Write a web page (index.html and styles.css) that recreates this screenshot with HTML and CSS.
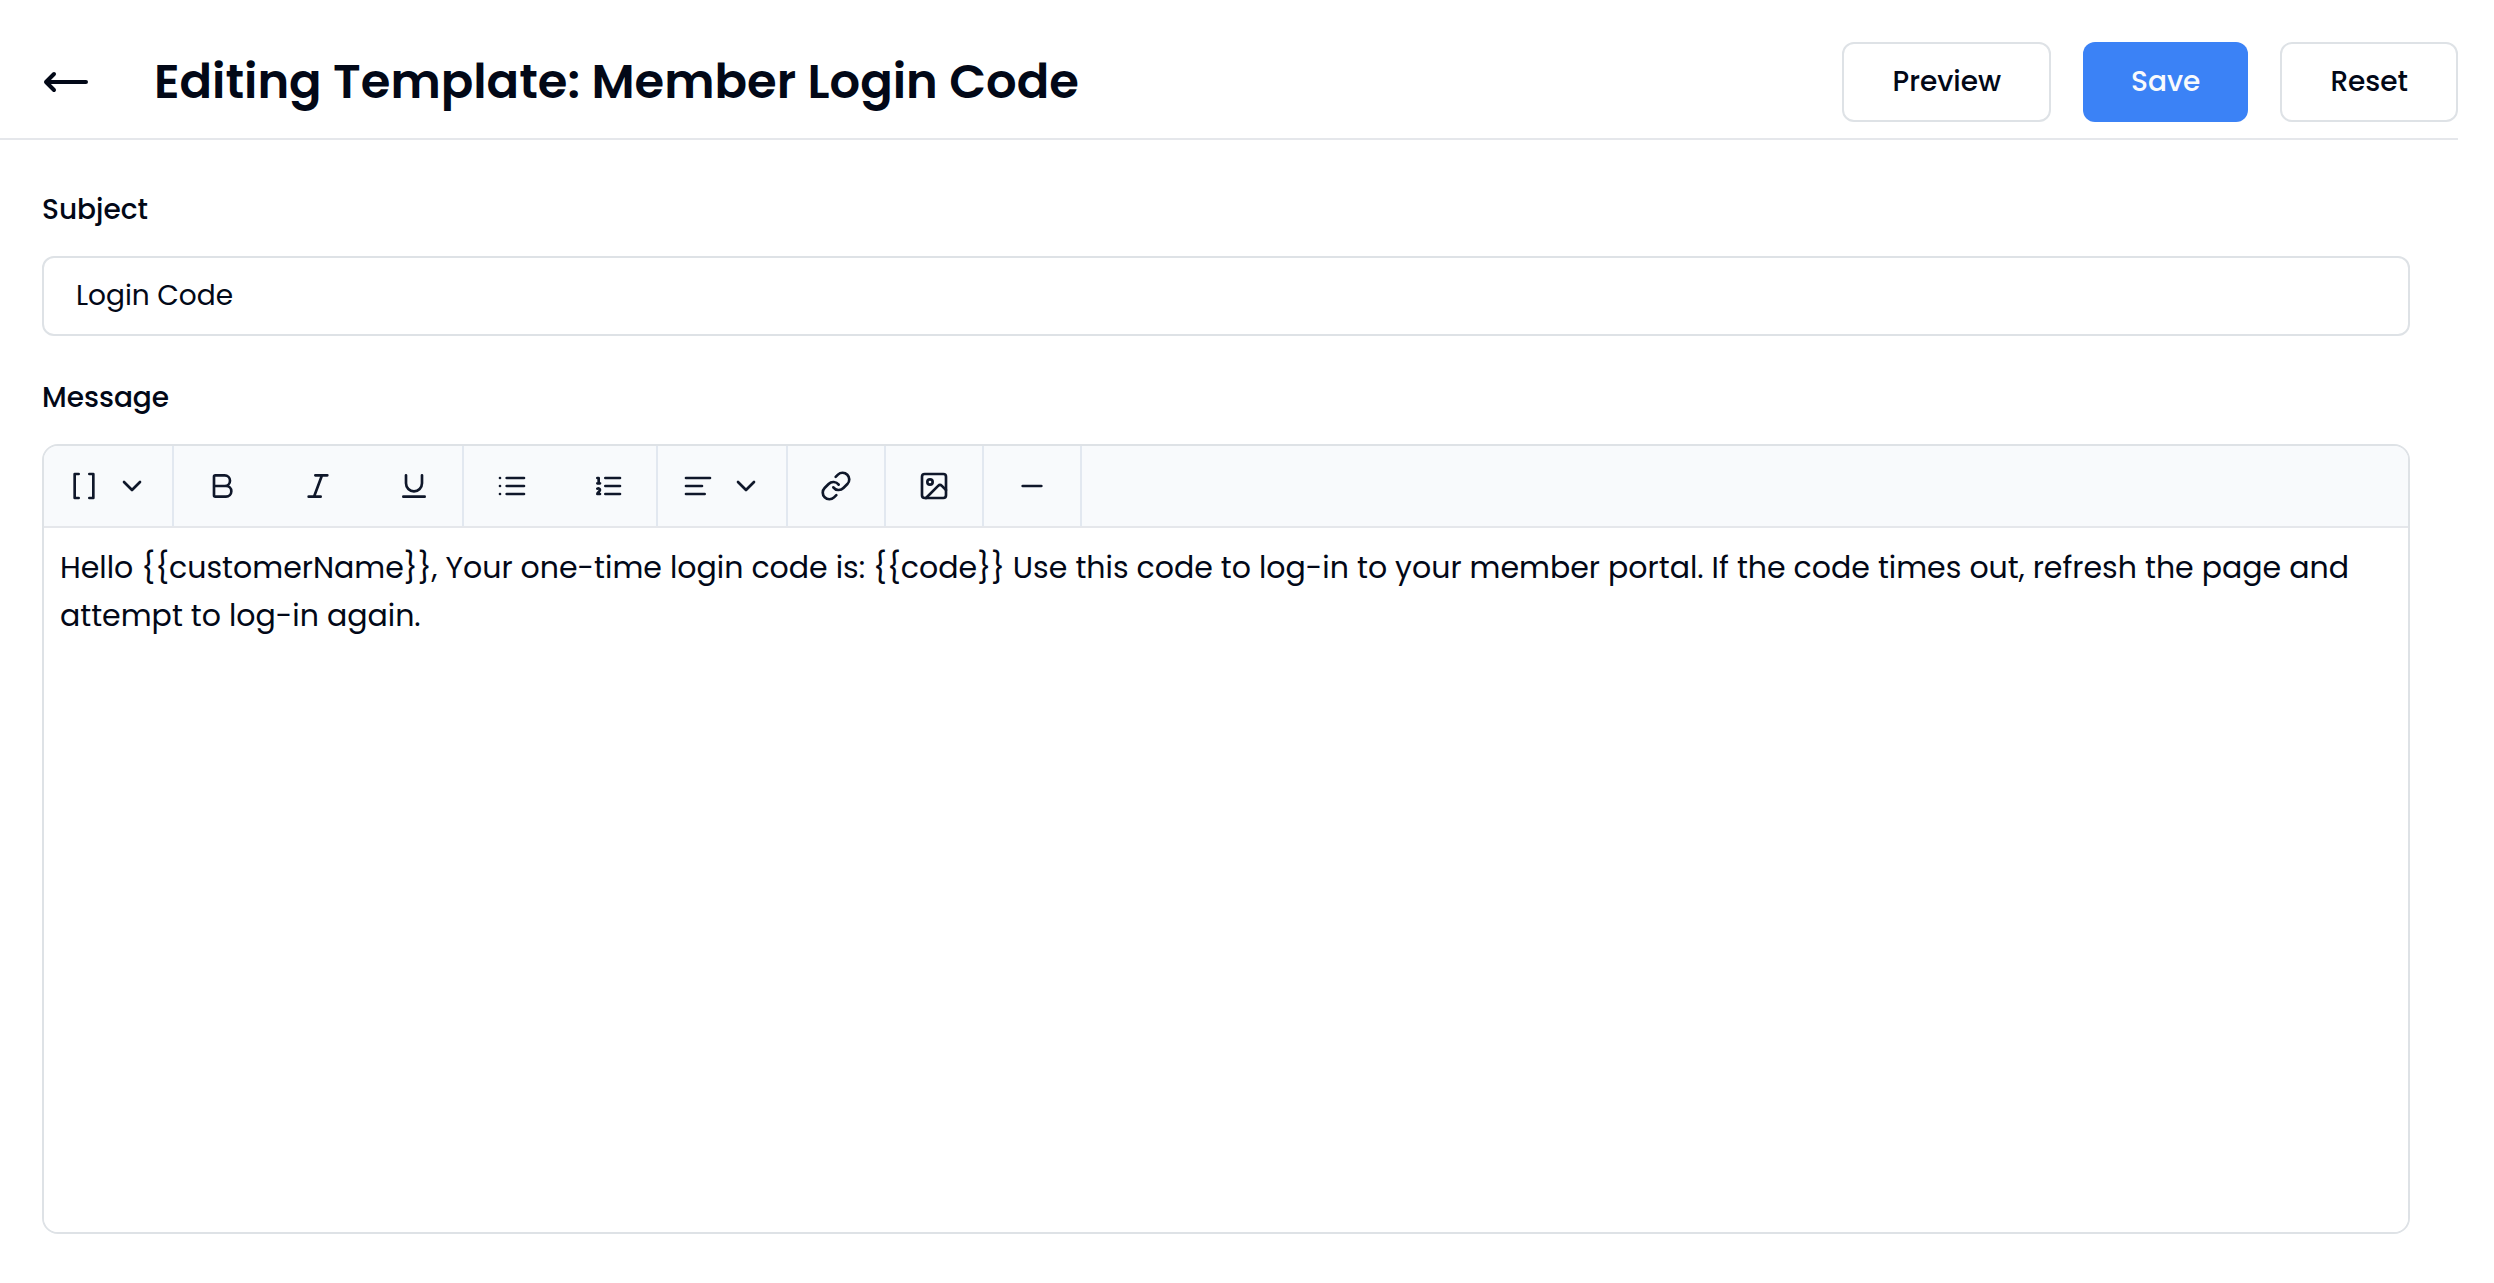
FILE: index.html
```html
<!DOCTYPE html>
<html lang="en">
<head>
    <meta charset="UTF-8">
    <meta name="viewport" content="width=device-width, initial-scale=1">
    <title>Editing Template: Member Login Code</title>
    <link rel="stylesheet" href="styles.css">
</head>
<body>
    <header class="header">
        <a class="back" href="#" aria-label="Back">
            <svg class="back-icon" viewBox="0 0 48 48"><path d="M12 16 4 24l8 8M4 24h40"/></svg>
        </a>
        <h1 class="title">Editing Template: Member Login Code</h1>
        <div class="actions">
            <button type="button" class="btn">Preview</button>
            <button type="submit" form="templateForm" class="btn btn-primary">Save</button>
            <button type="reset" form="templateForm" class="btn">Reset</button>
        </div>
    </header>

    <form id="templateForm" class="form">
        <div class="field">
            <label class="label" for="subject">Subject</label>
            <input class="input" type="text" id="subject" value="Login Code">
        </div>

        <div class="field">
            <label class="label" for="message">Message</label>
            <div class="editor">
                <div class="toolbar" role="toolbar" aria-label="Formatting">
                    <div class="group">
                        <button type="button" class="tool tool-menu" aria-label="Insert variable">
                            <svg class="icon" viewBox="0 0 24 24"><path d="M16 3h3v18h-3M8 21H5V3h3"/></svg>
                            <svg class="icon" viewBox="0 0 24 24"><path d="m6 9 6 6 6-6"/></svg>
                        </button>
                    </div>
                    <div class="group">
                        <button type="button" class="tool" aria-label="Bold">
                            <svg class="icon" viewBox="0 0 24 24"><path d="M6 12h9a4 4 0 0 1 0 8H7a1 1 0 0 1-1-1V5a1 1 0 0 1 1-1h7a4 4 0 0 1 0 8"/></svg>
                        </button>
                        <button type="button" class="tool" aria-label="Italic">
                            <svg class="icon" viewBox="0 0 24 24"><path d="M19 4h-9M14 20H5M15 4 9 20"/></svg>
                        </button>
                        <button type="button" class="tool" aria-label="Underline">
                            <svg class="icon" viewBox="0 0 24 24"><path d="M6 4v6a6 6 0 0 0 12 0V4M4 20h16"/></svg>
                        </button>
                    </div>
                    <div class="group">
                        <button type="button" class="tool" aria-label="Bullet list">
                            <svg class="icon" viewBox="0 0 24 24"><path d="M8 6h13M8 12h13M8 18h13M3 6h.01M3 12h.01M3 18h.01"/></svg>
                        </button>
                        <button type="button" class="tool" aria-label="Numbered list">
                            <svg class="icon" viewBox="0 0 24 24"><path d="M10 6h11M10 12h11M10 18h11M4 6h1v4M4 10h2M6 18H4c0-1 2-2 2-3s-1-1.500-2-1"/></svg>
                        </button>
                    </div>
                    <div class="group">
                        <button type="button" class="tool tool-menu" aria-label="Text alignment">
                            <svg class="icon" viewBox="0 0 24 24"><path d="M21 6H3M15 12H3M17 18H3"/></svg>
                            <svg class="icon" viewBox="0 0 24 24"><path d="m6 9 6 6 6-6"/></svg>
                        </button>
                    </div>
                    <div class="group">
                        <button type="button" class="tool" aria-label="Link">
                            <svg class="icon" viewBox="0 0 24 24"><path d="M10 13a5 5 0 0 0 7.540.540l3-3a5 5 0 0 0-7.070-7.070l-1.720 1.710"/><path d="M14 11a5 5 0 0 0-7.540-.540l-3 3a5 5 0 0 0 7.070 7.070l1.710-1.710"/></svg>
                        </button>
                    </div>
                    <div class="group">
                        <button type="button" class="tool" aria-label="Image">
                            <svg class="icon" viewBox="0 0 24 24"><rect x="3" y="3" width="18" height="18" rx="2"/><circle cx="9" cy="9" r="2"/><path d="m21 15-3.086-3.086a2 2 0 0 0-2.828 0L6 21"/></svg>
                        </button>
                    </div>
                    <div class="group">
                        <button type="button" class="tool" aria-label="Divider">
                            <svg class="icon" viewBox="0 0 24 24"><path d="M5 12h14"/></svg>
                        </button>
                    </div>
                </div>
                <textarea class="message" id="message">Hello {{customerName}}, Your one-time login code is: {{code}} Use this code to log-in to your member portal. If the code times out, refresh the page and attempt to log-in again.</textarea>
            </div>
        </div>
    </form>
</body>
</html>
```

FILE: styles.css
```css
* {
  box-sizing: border-box;
}

body {
  font-family: Poppins, Inter, sans-serif;
  font-size: 28px;
  color: #020817;
  background-color: #fff;
  margin: 0;
  padding-right: 36px;
}

button, input, textarea {
  font: inherit;
  color: inherit;
}

.header {
  display: flex;
  align-items: center;
  padding: 42px 0 16px 42px;
  border-bottom: 2px solid #e5e7eb;
}

.back {
  display: flex;
  margin-right: 64px;
  color: inherit;
}

.back-icon {
  width: 48px;
  height: 48px;
  fill: none;
  stroke: currentColor;
  stroke-width: 4;
  stroke-linecap: round;
  stroke-linejoin: round;
}

.title {
  flex: 1;
  margin: 0;
  font-size: 48px;
  line-height: 72px;
  font-weight: 600;
}

.actions {
  display: flex;
  gap: 32px;
}

.btn {
  height: 80px;
  padding: 0 48px;
  border: 2px solid #dee2e6;
  border-radius: 12px;
  background-color: #fff;
  font-weight: 500;
  cursor: pointer;
}

.btn-primary {
  border: none;
  background-color: #3b82f6;
  color: #f8fafc;
}

.form {
  display: flex;
  flex-direction: column;
  gap: 40px;
  padding: 48px 48px 48px 42px;
}

.field {
  display: flex;
  flex-direction: column;
  gap: 24px;
}

.label {
  line-height: 44px;
  font-weight: 500;
}

.input {
  width: 100%;
  height: 80px;
  padding: 0 32px;
  border: 2px solid #dee2e6;
  border-radius: 12px;
  background-color: #fff;
}

.editor {
  border: 2px solid #dee2e6;
  border-radius: 16px;
  overflow: hidden;
}

.toolbar {
  display: flex;
  background-color: #f8fafc;
  border-bottom: 2px solid #e5e7eb;
}

.group {
  display: flex;
  border-right: 2px solid #e2e8f0;
}

.tool {
  display: flex;
  align-items: center;
  justify-content: center;
  gap: 16px;
  width: 96px;
  height: 80px;
  padding: 0;
  border: none;
  background: none;
  color: #0f172a;
  cursor: pointer;
}

.tool-menu {
  width: 128px;
}

.icon {
  width: 32px;
  height: 32px;
  fill: none;
  stroke: currentColor;
  stroke-width: 2;
  stroke-linecap: round;
  stroke-linejoin: round;
}

.message {
  display: block;
  width: 100%;
  height: 704px;
  padding: 16px;
  border: none;
  outline: none;
  resize: none;
  background-color: #fff;
  font-size: 30px;
  line-height: 48px;
}
```
